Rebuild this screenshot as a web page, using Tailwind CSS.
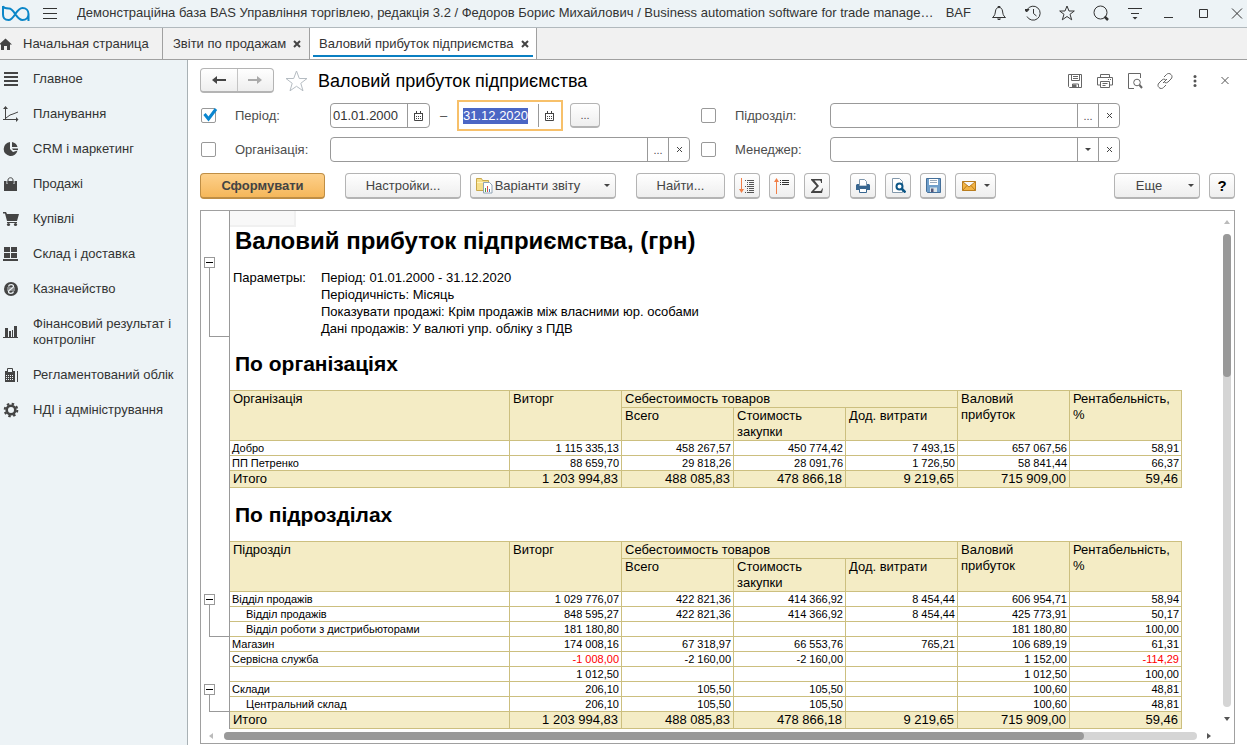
<!DOCTYPE html>
<html lang="uk">
<head>
<meta charset="utf-8">
<title>Валовий прибуток підприємства</title>
<script src="https://cdn.jsdelivr.net/npm/@tailwindcss/browser@4"></script>
</head>
<body class="flex h-screen flex-col overflow-hidden bg-white font-['Liberation_Sans',Arial,sans-serif] text-[13px] leading-4 text-[#333]">

<header class="flex h-7 shrink-0 items-center border-b border-[#b1b9bd] bg-[#edf3f6] pb-[2px] pr-[2px]">
  <svg class="ml-px shrink-0" width="30" height="18" viewBox="0 0 30 18" fill="none" stroke="#0a86c8" stroke-width="2" aria-label="BAS" role="img"><path d="M2 2v8.500c0 3.500 2.300 5.500 5.500 5.500C13.500 16 15 4 21.500 4c3.500 0 6 2.600 6 6s-2.500 6-6 6C15 16 13.500 4.500 8 4.500c-3 0-5.500 0-6-2.500M27.500 10v7"/></svg>
  <button class="ml-3 flex shrink-0" aria-label="Меню"><svg width="14" height="12" viewBox="0 0 14 12" stroke="#333"><path d="M0 1.500h14M0 6.500h14M0 11.500h14"/></svg></button>
  <span class="ml-5 min-w-0 grow truncate">Демонстраційна база BAS Управління торгівлею, редакція 3.2 / Федоров Борис Михайлович / Business automation software for trade manage…</span>
  <span class="ml-1 shrink-0">BAF</span>
  <div class="ml-5 flex shrink-0 items-center gap-[18px] [&_button]:flex">
    <button aria-label="Сповіщення"><svg width="16" height="16" viewBox="0 0 16 16" fill="none" stroke="#333"><path d="M1.500 12.500h13c-2.500-2-2.500-3.500-3-6.500C11 3.500 10 2.500 8 2.500S5 3.500 4.500 6c-.5 3-.5 4.500-3 6.500z"/><path d="M7 2.500v-1h2v1"/><path d="M6 13.500h4l-1 1.500H7z" fill="#333" stroke="none"/></svg></button>
    <button aria-label="Історія"><svg width="16" height="16" viewBox="0 0 16 16" fill="none" stroke="#333"><path d="M2.200 4.500A7 7 0 1 1 2 11.500M8.500 4v4.500l3 2.500"/><path d="M0 4.500h4L1.500 7z" fill="#333"/></svg></button>
    <button aria-label="Обране"><svg width="16" height="16" viewBox="0 0 16 16" fill="none" stroke="#333"><path d="M8 1l2 5h5.300l-4.300 3.300 1.700 5.500L8 11.500l-4.700 3.300L5 9.300.700 6H6z"/></svg></button>
    <button aria-label="Пошук"><svg width="16" height="16" viewBox="0 0 16 16" fill="none" stroke="#333"><circle cx="7.500" cy="7.500" r="6.500"/><path d="M11.500 11.500l3.500 3.500" stroke-width="2.500"/></svg></button>
    <button aria-label="Налаштування"><svg width="16" height="16" viewBox="0 0 16 16" stroke="#333"><path d="M1 3.500h14M4 8.500h8"/><path d="M5.500 12h5L8 14.500z" fill="#333" stroke="none"/></svg></button>
    <button aria-label="Згорнути"><svg width="16" height="16" viewBox="0 0 16 16" stroke="#333"><path d="M3 12.500h9"/></svg></button>
    <button aria-label="Розгорнути"><svg width="16" height="16" viewBox="0 0 16 16" fill="none" stroke="#333"><path d="M4.500 4.500h8v8h-8z"/></svg></button>
    <button aria-label="Закрити"><svg width="16" height="16" viewBox="0 0 16 16" stroke="#333"><path d="M3 3.500l10 10M13 3.500l-10 10"/></svg></button>
  </div>
</header>

<nav class="flex h-8 shrink-0 border-b border-[#a0a0a0] bg-[#f1f1f1]">
  <a href="#" class="flex w-[163px] items-center gap-[11px] border-r border-[#a0a0a0]"><svg width="12" height="12" viewBox="0 0 12 12" fill="#444"><path d="M5.500.500L12 6.500h-2V12H7V8H4v4H1V6.500H-1z"/></svg>Начальная страница</a>
  <div class="flex w-[147px] items-center gap-[7px] border-r border-[#a0a0a0] pl-[10px]"><a href="#">Звіти по продажам</a><button aria-label="Закрити вкладку"><svg width="8" height="8" viewBox="0 0 8 8" stroke="#444" stroke-width="2"><path d="M1 1l6 6M7 1L1 7"/></svg></button></div>
  <div class="flex w-[227px] border-r border-[#a0a0a0] bg-white px-[3px] pb-[2px]"><div class="flex grow items-center gap-[7px] border-b-2 border-[#0a7fc2] pl-[6px] pt-1"><a href="#">Валовий прибуток підприємства</a><button aria-label="Закрити вкладку"><svg width="8" height="8" viewBox="0 0 8 8" stroke="#444" stroke-width="2"><path d="M1 1l6 6M7 1L1 7"/></svg></button></div></div>
</nav>

<div class="flex min-h-0 grow">
<aside class="w-[188px] shrink-0 border-r border-[#a9b1b5] bg-[#edf3f6] pt-[2px]">
  <ul class="[&_a]:flex [&_a]:items-center [&_a]:gap-[14px] [&_a]:py-[9px] [&_a]:pl-[3px] [&_li]:min-h-[35px] [&_svg]:shrink-0 [&_svg]:fill-[#444]">
    <li><a href="#"><svg width="16" height="16" viewBox="0 0 16 16"><path d="M1 1h14v2H1zM1 5h14v2H1zM1 9h14v2H1zM1 13h14v2H1z"/></svg>Главное</a></li>
    <li><a href="#"><svg width="16" height="16" viewBox="0 0 16 16"><path d="M2 3h1v11H2zM0 13h14v1H0zM2.500 0L5 3H0zM13 11l2.500 2.500L13 16z"/><path d="M3 12l4-3 3-1 5-2" style="fill:none" stroke="#444"/></svg>Планування</a></li>
    <li><a href="#"><svg width="16" height="16" viewBox="0 0 16 16"><path d="M7 1v7l3 3 4.500-1.500A7 7 0 1 1 7 1zM9 1c3 .500 5 2.500 5.500 5H9zM9 7.500h6V9h-5z"/></svg>CRM і маркетинг</a></li>
    <li><a href="#"><svg width="16" height="16" viewBox="0 0 16 16"><path d="M1 5h13v10H1z"/><path d="M4 8V4c0-4 7-4 7 0v4" style="fill:none" stroke="#edf3f6"/><path d="M5 7V4c0-3 5-3 5 0v3" style="fill:none" stroke="#444"/></svg>Продажі</a></li>
    <li><a href="#"><svg width="16" height="16" viewBox="0 0 16 16"><path d="M0 1h3l1 2h12l-2 7H4L2 2.500H0zM4 11h10v1H4z"/><circle cx="5.500" cy="13.500" r="1.600"/><circle cx="12.500" cy="13.500" r="1.600"/></svg>Купівлі</a></li>
    <li><a href="#"><svg width="16" height="16" viewBox="0 0 16 16"><path d="M1 1h6v5H1zM8 1h6v5H8zM1 7h6v5H1zM8 7h6v5H8zM0 13h15v2H0z"/></svg>Склад і доставка</a></li>
    <li><a href="#"><svg width="16" height="16" viewBox="0 0 16 16"><circle cx="8" cy="8" r="7"/><path d="M5.500 5.500C6 3 10.500 3 10.500 5.500c0 1.500-5 3.500-5 5 0 2.500 4.500 2.500 5 0" style="fill:none" stroke="#edf3f6" stroke-width="1.300"/><path d="M4 7h8M4 9h8" stroke="#edf3f6" stroke-width=".8"/></svg>Казначейство</a></li>
    <li class="pb-px"><a href="#"><svg width="16" height="16" viewBox="0 0 16 16"><path d="M2 4h3v9H2zM6 7h2v6H6zM9 6h1v7H9zM11 2h3v11h-3zM0 13h15v1H0z"/></svg><span class="w-[145px]">Фінансовий результат і контролінг</span></a></li>
    <li><a href="#"><svg width="16" height="16" viewBox="0 0 16 16"><path d="M2 4h10v11H2zM14 4h1v11h-1z"/><path d="M4.500 1.500h5v4h-5z" style="fill:#edf3f6" stroke="#444"/><path d="M3 8.500h8M3 10.500h8M3 12.500h8" stroke="#edf3f6" stroke-dasharray="1 1"/></svg>Регламентований облік</a></li>
    <li><a href="#"><svg width="16" height="16" viewBox="0 0 16 16"><circle cx="8" cy="8" r="4.300" style="fill:none" stroke="#444" stroke-width="2.600"/><circle cx="8" cy="8" r="6.300" style="fill:none" stroke="#444" stroke-width="2" stroke-dasharray="2.470 2.470"/></svg>НДІ і адміністрування</a></li>
  </ul>
</aside>

<main class="flex min-w-0 grow flex-col pb-px pl-3 pr-3 pt-2">
  <div class="flex h-[25px] shrink-0 items-center">
    <div class="flex h-[25px] w-[74px] rounded-sm border border-b-2 border-[#b4b4b4] bg-linear-to-b from-white to-[#eeeeee] [&_button]:flex [&_button]:grow [&_button]:items-center [&_button]:justify-center">
      <button aria-label="Назад" class="border-r border-[#c4c4c4]"><svg width="14" height="8" viewBox="0 0 14 8" fill="#444"><path d="M5 0v3h9v2H5v3L0 4z"/></svg></button>
      <button aria-label="Вперед"><svg width="14" height="8" viewBox="0 0 14 8" fill="#aaa"><path d="M9 0v3H0v2h9v3l5-4z"/></svg></button>
    </div>
    <button class="ml-[11px] flex" aria-label="До обраного"><svg width="23" height="22" viewBox="0 0 23 22" fill="none" stroke="#b5bcc2"><path d="M11.500 1l2.800 7.500H22l-6.200 4.800 2.200 7.500-6.500-4.500L5 20.800l2.200-7.500L1 8.500h7.700z"/></svg></button>
    <h1 class="ml-[10px] grow text-[18px] leading-6 text-black">Валовий прибуток підприємства</h1>
    <div class="flex gap-[14px] pr-[2px] [&_button]:flex">
      <button aria-label="Зберегти"><svg width="16" height="16" viewBox="0 0 16 16" fill="none" stroke="#666"><path d="M1.500 1.500h13v13h-12l-1-1zM4.500 1.500v6h8v-6M6 3.500h5M6 5.500h5M5.500 14v-3h6v3"/><path d="M6 12h3v2H6z" fill="#666"/></svg></button>
      <button aria-label="Друк"><svg width="16" height="16" viewBox="0 0 16 16" fill="none" stroke="#666"><path d="M3.500 4V1.500h9V4M3.500 12h-3V4.500h15V12h-3M3.500 8.500h9v6h-9zM5.500 10.500h5M5.500 12.500h3M11 6.500h1M13 6.500h1"/></svg></button>
      <button aria-label="Перегляд"><svg width="16" height="16" viewBox="0 0 16 16" fill="none" stroke="#666"><path d="M7 15.500H1.500v-15h12V5"/><circle cx="10" cy="9.500" r="3.300"/><path d="M12.500 12l2.500 3" stroke-width="2"/></svg></button>
      <button aria-label="Посилання"><svg width="16" height="16" viewBox="0 0 16 16" fill="none" stroke="#666"><path d="M7 4l2.500-2.500a3 3 0 0 1 4.500 0 3 3 0 0 1 0 4.500L11 9a3 3 0 0 1-3.500.500M9 12l-2.500 2.500a3 3 0 0 1-4.500 0 3 3 0 0 1 0-4.500L5 7a3 3 0 0 1 3.500-.5M6 10l4-4"/></svg></button>
      <button aria-label="Ще"><svg width="16" height="16" viewBox="0 0 16 16" fill="#555"><circle cx="8" cy="3.500" r="1.500"/><circle cx="8" cy="8" r="1.500"/><circle cx="8" cy="12.500" r="1.500"/></svg></button>
      <button aria-label="Закрити"><svg width="16" height="16" viewBox="0 0 16 16" stroke="#555"><path d="M4.500 4l7 7M11.500 4l-7 7"/></svg></button>
    </div>
  </div>

  <form class="mt-[10px] grid shrink-0 auto-rows-[25px] grid-cols-[35px_95px_370px_35px_95px_290px] items-center gap-y-[9px] text-[#4d4d4d] [&_label]:text-[13px]">
    <span class="relative flex"><input id="c1" type="checkbox" checked class="ml-px size-[15px] appearance-none rounded-[2px] border border-[#999]"><svg class="pointer-events-none absolute left-[3px] top-0" width="15" height="14" viewBox="0 0 15 14" fill="none" stroke="#0a86d0" stroke-width="3"><path d="M1.500 6l4 5L13 1"/></svg></span>
    <label for="c1">Період:</label>
    <div class="flex items-center">
      <div class="flex h-[25px] w-[100px] overflow-hidden rounded border border-[#999]"><input aria-label="Початок періоду" value="01.01.2000" class="w-[77px] border-r border-[#999] pl-[2px] text-[13px] text-[#333] outline-none"><button type="button" aria-label="Календар" class="flex grow items-center justify-center"><svg width="9" height="10" viewBox="0 0 9 10" fill="none" stroke="#444"><path d="M.500 2.500h8v7h-8zM0 2.500h9M2.500 0v3M6.500 0v3"/><path d="M2 5.500h5M2 7.500h5" stroke-dasharray="1 1"/></svg></button></div>
      <span class="w-[27px] text-center">–</span>
      <div class="-my-[3px] flex h-[31px] w-[106px] border-2 border-[#f7c06a] p-[2px]"><input id="end" aria-label="Кінець періоду" value="31.12.2020" class="w-[78px] border-r border-[#999] pl-[2px] text-[13px] text-[#333] outline-none selection:bg-[#4b66c4] selection:text-white"><button type="button" aria-label="Календар" class="flex grow items-center justify-center"><svg width="9" height="10" viewBox="0 0 9 10" fill="none" stroke="#444"><path d="M.500 2.500h8v7h-8zM0 2.500h9M2.500 0v3M6.500 0v3"/><path d="M2 5.500h5M2 7.500h5" stroke-dasharray="1 1"/></svg></button></div>
      <button type="button" class="ml-[7px] h-[25px] w-[30px] rounded-sm border border-b-2 border-[#b4b4b4] bg-linear-to-b from-white to-[#eee] text-[11px]">...</button>
    </div>
    <input id="c2" type="checkbox" class="ml-px size-[15px] appearance-none rounded-[2px] border border-[#999]">
    <label for="c2">Підрозділ:</label>
    <div class="flex h-[25px] overflow-hidden rounded border border-[#999] [&_button]:flex [&_button]:w-[21px] [&_button]:items-center [&_button]:justify-center [&_button]:border-l [&_button]:border-[#999] [&_button]:text-[11px]"><input aria-label="Підрозділ" class="min-w-0 grow px-1 outline-none"><button type="button">...</button><button type="button" aria-label="Очистити"><svg width="7" height="7" viewBox="0 0 7 7" stroke="#444"><path d="M1 1l5 5M6 1L1 6"/></svg></button></div>

    <input id="c3" type="checkbox" class="ml-px size-[15px] appearance-none rounded-[2px] border border-[#999]">
    <label for="c3">Організація:</label>
    <div class="flex h-[25px] w-[360px] overflow-hidden rounded border border-[#999] [&_button]:flex [&_button]:w-[21px] [&_button]:items-center [&_button]:justify-center [&_button]:border-l [&_button]:border-[#999] [&_button]:text-[11px]"><input aria-label="Організація" class="min-w-0 grow px-1 outline-none"><button type="button">...</button><button type="button" aria-label="Очистити"><svg width="7" height="7" viewBox="0 0 7 7" stroke="#444"><path d="M1 1l5 5M6 1L1 6"/></svg></button></div>
    <input id="c4" type="checkbox" class="ml-px size-[15px] appearance-none rounded-[2px] border border-[#999]">
    <label for="c4">Менеджер:</label>
    <div class="flex h-[25px] overflow-hidden rounded border border-[#999] [&_button]:flex [&_button]:w-[21px] [&_button]:items-center [&_button]:justify-center [&_button]:border-l [&_button]:border-[#999]"><input aria-label="Менеджер" class="min-w-0 grow px-1 outline-none"><button type="button" aria-label="Обрати"><svg width="6" height="3" viewBox="0 0 6 3" fill="#444"><path d="M0 0h6L3 3z"/></svg></button><button type="button" aria-label="Очистити"><svg width="7" height="7" viewBox="0 0 7 7" stroke="#444"><path d="M1 1l5 5M6 1L1 6"/></svg></button></div>
  </form>

  <div class="mt-[11px] flex h-[26px] shrink-0 gap-[9px] text-[#444] [&_button]:flex [&_button]:items-center [&_button]:justify-center [&_button]:rounded-sm [&_button]:border [&_button]:border-b-2">
    <button class="mr-[11px] w-[125px] border-[#bf8e45] bg-linear-to-b from-[#fdd08a] to-[#f5b75a] font-bold">Сформувати</button>
    <div class="mr-[11px] flex gap-[9px] [&_button]:border-[#b4b4b4] [&_button]:bg-linear-to-b [&_button]:from-white [&_button]:to-[#eee]">
      <button class="w-[116px]">Настройки...</button>
      <button class="w-[146px]"><svg width="17" height="17" viewBox="0 0 17 17"><path d="M.500 1.500h5l1 2h6v10H.500z" fill="#f6df8b" stroke="#c9a84a"/><path d="M1 5.500h11" stroke="#fff3c0"/><path d="M7.500 5.500h6l2.500 2.500v8H7.500z" fill="#fff" stroke="#8fa3b5"/><path d="M9 11h1v4H9z" fill="#4a9c4a"/><path d="M11 9h1v6h-1z" fill="#d9534f"/><path d="M13 12h1v3h-1z" fill="#3f7fc0"/></svg><span class="ml-[2px]">Варіанти звіту</span><svg class="ml-6" width="6" height="3" viewBox="0 0 6 3" fill="#444"><path d="M0 0h6L3 3z"/></svg></button>
    </div>
    <div class="mr-[11px] flex gap-[9px] [&_button]:w-[26px] [&_button]:border-[#b4b4b4] [&_button]:bg-linear-to-b [&_button]:from-white [&_button]:to-[#eee]">
      <button class="min-w-[89px]">Найти...</button>
      <button aria-label="Розгорнути групи"><svg width="16" height="16" viewBox="0 0 16 16" fill="none"><path d="M2.500 0v14" stroke="#f07f48"/><path d="M0 11h5l-2.500 4z" fill="#f07f48"/><path d="M6 2.500h1M8 2.500h7M8 4.500h1M10 4.500h5M8 6.500h1M10 6.500h5M6 8.500h1M8 8.500h7M8 10.500h1M10 10.500h5M8 12.500h1M10 12.500h5M6 14.500h1M8 14.500h7" stroke="#555"/></svg></button>
      <button aria-label="Згорнути групи"><svg width="16" height="16" viewBox="0 0 16 16" fill="none"><path d="M2.500 2v14" stroke="#f07f48"/><path d="M0 4h5L2.500 0z" fill="#f07f48"/><path d="M6 2.500h1M8 2.500h7M6 4.500h1M8 4.500h7M6 6.500h1M8 6.500h7" stroke="#333"/></svg></button>
      <button aria-label="Сума"><svg width="14" height="14" viewBox="0 0 14 14" fill="#444"><path d="M1 0h11v4h-1c0-2-.5-2.500-2-2.500H4.500L9 7l-5 5h5.500c1.500 0 2-.5 2.500-2.500h1L12 14H1v-1l5.500-6L1 1z"/></svg></button>
    </div>
    <div class="flex grow gap-[9px] [&_button]:w-[26px] [&_button]:border-[#b4b4b4] [&_button]:bg-linear-to-b [&_button]:from-white [&_button]:to-[#eee]">
      <button aria-label="Друкувати"><svg width="14" height="14" viewBox="0 0 14 14"><path d="M3.500.500h5l2 2V7h-7z" fill="#fff" stroke="#7f97ad"/><path d="M1 5h2v2h8V5h2l1 1v5H0V6z" fill="#386690"/><path d="M3.500 9.500h7v4h-7z" fill="#fff" stroke="#386690"/></svg></button>
      <button aria-label="Попередній перегляд"><svg width="15" height="15" viewBox="0 0 15 15" fill="none"><path d="M1.500.500h7l3 3v11h-10z" fill="#fff" stroke="#8298ab"/><circle cx="8.500" cy="8.500" r="3" stroke="#0c5686" stroke-width="2"/><path d="M10.500 10.500l4 4" stroke="#0c5686" stroke-width="2.500"/></svg></button>
      <button aria-label="Зберегти як"><svg width="15" height="15" viewBox="0 0 15 15"><path d="M.500.500h14v14h-13l-1-1z" fill="#6f9fcb" stroke="#446f99"/><path d="M3 1h9v6H3z" fill="#fff"/><path d="M4 2.500h7M4 4.500h7" stroke="#9ab"/><path d="M4 9.500h7V14H4z" fill="#dce6ea"/><path d="M5 10.500h2.500V14H5z" fill="#557"/></svg></button>
      <button aria-label="Надіслати поштою" class="min-w-[41px]"><svg width="14" height="10" viewBox="0 0 14 10" fill="#f3b444" stroke="#b97d1e"><path d="M.500.500h13v9H.500zM.500.500L7 6 13.500.500M.500 9.500L5 4.500M13.500 9.500L9 4.500"/></svg><svg class="ml-2" width="6" height="3" viewBox="0 0 6 3" fill="#444"><path d="M0 0h6L3 3z"/></svg></button>
      <button class="ml-auto min-w-[86px] pl-4">Еще<svg class="ml-[26px]" width="6" height="3" viewBox="0 0 6 3" fill="#444"><path d="M0 0h6L3 3z"/></svg></button>
      <button class="text-[15px] font-bold text-black">?</button>
    </div>
  </div>

  <section class="mt-[11px] flex min-h-0 grow flex-col border border-[#a0a0a0]">
    <div class="flex min-h-0 grow">
      <div class="flex min-h-0 grow overflow-hidden text-black">
        <div class="flex w-[29px] shrink-0 flex-col border-r border-[#999] [&_button]:ml-[3px] [&_button]:flex [&_button]:size-[11px] [&_button]:shrink-0 [&_button]:items-center [&_button]:justify-center [&_button]:border [&_button]:border-[#999]">
          <div class="mt-[46px] flex h-20 shrink-0 flex-col"><button aria-label="Згорнути групу"><span class="h-px w-[7px] bg-black"></span></button><div class="ml-2 grow border-b border-l border-[#999]"></div></div>
          <div class="mt-[257px] flex h-[43px] shrink-0 flex-col"><button aria-label="Згорнути групу"><span class="h-px w-[7px] bg-black"></span></button><div class="ml-2 grow border-b border-l border-[#999]"></div></div>
          <div class="mt-[47px] flex h-7 shrink-0 flex-col"><button aria-label="Згорнути групу"><span class="h-px w-[7px] bg-black"></span></button><div class="ml-2 grow border-b border-l border-[#999]"></div></div>
        </div>
        <div class="min-w-0 grow">
          <div class="h-4 w-[66px] border-b-2 border-r-2 border-[#f0f0f0] bg-[#f8f8f8]"></div>
          <h2 class="pl-[5px] text-[24px] font-bold leading-7">Валовий прибуток підприємства, (грн)</h2>
          <dl class="mt-[14px] flex pl-[3px] leading-[17px]"><dt class="w-[88px]">Параметры:</dt><dd>Період: 01.01.2000 - 31.12.2020<br>Періодичність: Місяць<br>Показувати продажі: Крім продажів між власними юр. особами<br>Дані продажів: У валюті упр. обліку з ПДВ</dd></dl>
          <h3 class="mt-[15px] pl-[5px] text-[21px] font-bold leading-6">По організаціях</h3>
          <table class="mt-[14px] w-[952px] table-fixed border-separate border-spacing-0 border-t border-[#ccbf7f] [&_td]:h-[15px] [&_td]:border-b [&_td]:border-r [&_td]:border-[#ccbf7f] [&_td]:px-[2px] [&_td]:text-right [&_td]:text-[11px] [&_td]:leading-[14px] [&_td:first-child]:text-left [&_tfoot_td]:h-[17px] [&_tfoot_td]:bg-[#f4ecc5] [&_tfoot_td]:px-[3px] [&_tfoot_td]:text-[13px] [&_tfoot_td]:leading-4 [&_th]:border-b [&_th]:border-r [&_th]:border-[#ccbf7f] [&_th]:bg-[#f4ecc5] [&_th]:px-[3px] [&_th]:text-left [&_th]:align-top [&_th]:font-normal">
            <colgroup><col class="w-[280px]"><col span="6"></colgroup>
            <thead>
              <tr class="h-[17px]"><th rowspan="2">Організація</th><th rowspan="2">Виторг</th><th colspan="3">Себестоимость товаров</th><th rowspan="2">Валовий прибуток</th><th rowspan="2">Рентабельність, %</th></tr>
              <tr class="h-[33px]"><th>Всего</th><th>Стоимость закупки</th><th>Дод. витрати</th></tr>
            </thead>
            <tbody>
              <tr><td>Добро</td><td>1 115 335,13</td><td>458 267,57</td><td>450 774,42</td><td>7 493,15</td><td>657 067,56</td><td>58,91</td></tr>
              <tr><td>ПП Петренко</td><td>88 659,70</td><td>29 818,26</td><td>28 091,76</td><td>1 726,50</td><td>58 841,44</td><td>66,37</td></tr>
            </tbody>
            <tfoot><tr><td>Итого</td><td>1 203 994,83</td><td>488 085,83</td><td>478 866,18</td><td>9 219,65</td><td>715 909,00</td><td>59,46</td></tr></tfoot>
          </table>
          <h3 class="mt-[15px] pl-[5px] text-[21px] font-bold leading-6">По підрозділах</h3>
          <table class="mt-[14px] w-[952px] table-fixed border-separate border-spacing-0 border-t border-[#ccbf7f] [&_td]:h-[15px] [&_td]:border-b [&_td]:border-r [&_td]:border-[#ccbf7f] [&_td]:px-[2px] [&_td]:text-right [&_td]:text-[11px] [&_td]:leading-[14px] [&_td:first-child]:text-left [&_tfoot_td]:h-[17px] [&_tfoot_td]:bg-[#f4ecc5] [&_tfoot_td]:px-[3px] [&_tfoot_td]:text-[13px] [&_tfoot_td]:leading-4 [&_th]:border-b [&_th]:border-r [&_th]:border-[#ccbf7f] [&_th]:bg-[#f4ecc5] [&_th]:px-[3px] [&_th]:text-left [&_th]:align-top [&_th]:font-normal">
            <colgroup><col class="w-[280px]"><col span="6"></colgroup>
            <thead>
              <tr class="h-[17px]"><th rowspan="2">Підрозділ</th><th rowspan="2">Виторг</th><th colspan="3">Себестоимость товаров</th><th rowspan="2">Валовий прибуток</th><th rowspan="2">Рентабельність, %</th></tr>
              <tr class="h-[33px]"><th>Всего</th><th>Стоимость закупки</th><th>Дод. витрати</th></tr>
            </thead>
            <tbody>
              <tr><td>Відділ продажів</td><td>1 029 776,07</td><td>422 821,36</td><td>414 366,92</td><td>8 454,44</td><td>606 954,71</td><td>58,94</td></tr>
              <tr><td><span class="pl-[14px]">Відділ продажів</span></td><td>848 595,27</td><td>422 821,36</td><td>414 366,92</td><td>8 454,44</td><td>425 773,91</td><td>50,17</td></tr>
              <tr><td><span class="pl-[14px]">Відділ роботи з дистрибьюторами</span></td><td>181 180,80</td><td></td><td></td><td></td><td>181 180,80</td><td>100,00</td></tr>
              <tr><td>Магазин</td><td>174 008,16</td><td>67 318,97</td><td>66 553,76</td><td>765,21</td><td>106 689,19</td><td>61,31</td></tr>
              <tr><td>Сервісна служба</td><td class="text-[#ff0000]">-1 008,00</td><td>-2 160,00</td><td>-2 160,00</td><td></td><td>1 152,00</td><td class="text-[#ff0000]">-114,29</td></tr>
              <tr><td></td><td>1 012,50</td><td></td><td></td><td></td><td>1 012,50</td><td>100,00</td></tr>
              <tr><td>Склади</td><td>206,10</td><td>105,50</td><td>105,50</td><td></td><td>100,60</td><td>48,81</td></tr>
              <tr><td><span class="pl-[14px]">Центральний склад</span></td><td>206,10</td><td>105,50</td><td>105,50</td><td></td><td>100,60</td><td>48,81</td></tr>
            </tbody>
            <tfoot><tr><td>Итого</td><td>1 203 994,83</td><td>488 085,83</td><td>478 866,18</td><td>9 219,65</td><td>715 909,00</td><td>59,46</td></tr></tfoot>
          </table>
        </div>
      </div>
      <div class="flex w-[14px] shrink-0 flex-col items-center pt-[9px]">
        <svg width="6" height="4" viewBox="0 0 6 4" fill="#bbb"><path d="M0 4h6L3 0z"/></svg>
        <div class="mt-[10px] w-2 grow rounded-full bg-[#d5d5d5]"><div class="h-[143px] rounded-full bg-[#999]"></div></div>
        <svg class="mb-2 mt-[10px]" width="6" height="4" viewBox="0 0 6 4" fill="#555"><path d="M0 0h6L3 4z"/></svg>
      </div>
    </div>
    <div class="flex h-[14px] shrink-0 items-center pl-2 pr-[23px]">
      <svg width="4" height="6" viewBox="0 0 4 6" fill="#bbb"><path d="M4 0v6L0 3z"/></svg>
      <div class="ml-[11px] h-2 grow rounded-full bg-[#d5d5d5]"><div class="h-2 w-[88.400%] rounded-full bg-[#999]"></div></div>
      <svg class="ml-[10px]" width="4" height="6" viewBox="0 0 4 6" fill="#555"><path d="M0 0v6l4-3z"/></svg>
    </div>
  </section>
</main>
</div>
<script>
  const end = document.getElementById('end');
  end.focus();
  end.select();
</script>
</body>
</html>
